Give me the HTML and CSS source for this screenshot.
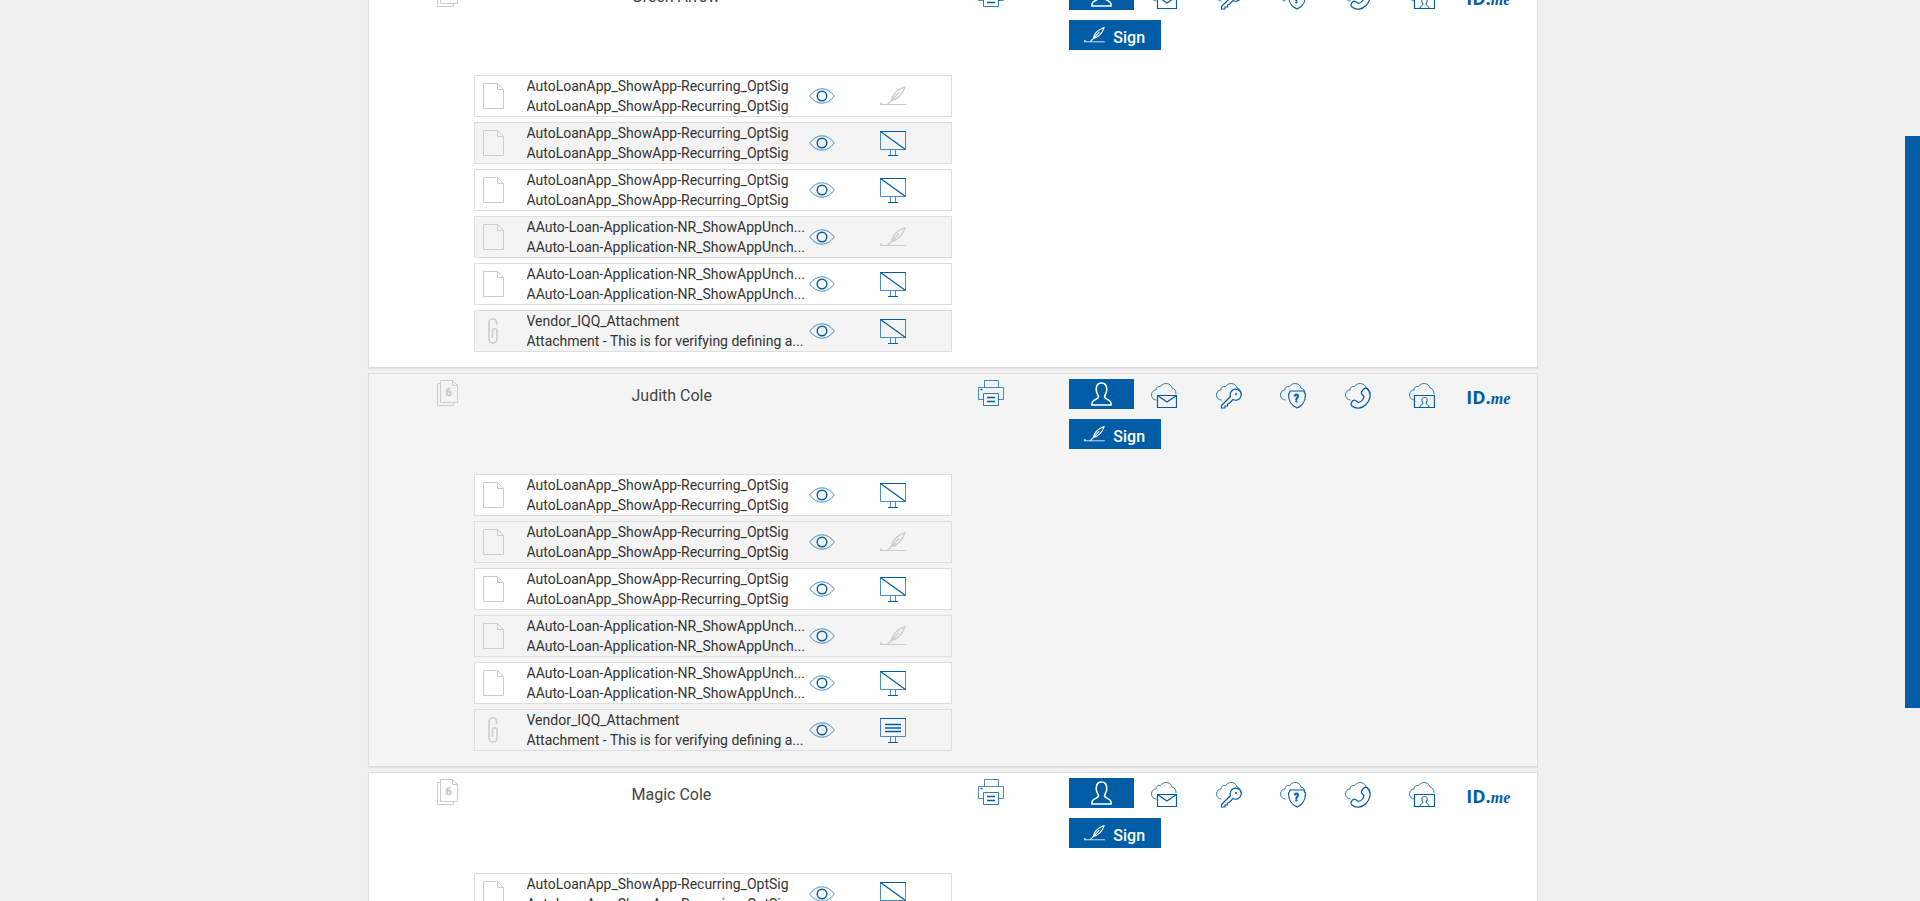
FILE: index.html
```html
<!DOCTYPE html>
<html lang="en">
<head>
    <meta charset="UTF-8">
    <meta name="viewport" content="width=device-width, initial-scale=1.0">
    <title>Sign Documents</title>
    <link rel="stylesheet" href="styles.css">
</head>
<body>
    <!-- icon sprite -->
    <svg class="sprite" aria-hidden="true">
        <symbol id="i-file" viewBox="0 0 21 26">
            <path d="M.5.5h14l6 6v19H.5zM14.5.5v6h6"/>
        </symbol>
        <symbol id="i-clip" viewBox="0 0 10 26">
            <path d="M8.500 7V4.500a3.700 3.700 0 0 0-7.500 0V21a4 4 0 0 0 8 0V12.500a2.300 2.300 0 0 0-4.500 0V20" stroke-width="1.600"/>
        </symbol>
        <symbol id="i-files" viewBox="0 0 21 26">
            <path d="M3 3.500H.5v22h16V23"/>
            <path d="M3.500.5h12l5 5v17h-17zM15.500.5v5h5"/>
            <text x="8.500" y="16" font-size="11">6</text>
        </symbol>
        <symbol id="i-eye" viewBox="0 0 26 16">
            <path d="M.7 8Q6 .8 13 .8T25.300 8Q20 15.200 13 15.200T.7 8z" stroke-width=".7"/>
            <circle cx="13" cy="8" r="4.800" stroke-width="1.400"/>
        </symbol>
        <symbol id="i-quill" viewBox="0 0 26 20">
            <path d="M0 18.500h26"/>
            <path d="M0 16.500h2v2H0z" fill="currentColor" stroke="none"/>
            <path d="M25 .7c-6 2.300-12.500 7-13.500 13.800C17 13.500 23 8 25 .7zM19 6.500l-7.500 8-4 3.700" stroke-width="1.300"/>
        </symbol>
        <symbol id="i-board-off" viewBox="0 0 26 25">
            <path d="M.5.5h25v18H.5zM10.500 19v5M15.500 19v5" stroke-width=".7"/>
            <path d="M0 .5h26M.5.5l25 18M8 24.500h10" stroke-width="1.200"/>
        </symbol>
        <symbol id="i-board" viewBox="0 0 26 25">
            <path d="M.5.5h25v18H.5zM10.500 19v5M15.500 19v5" stroke-width=".7"/>
            <path d="M0 .5h26M8 24.500h10" stroke-width="1.200"/>
            <path d="M5 6.500h16M5 10h16M5 13.500h16" stroke-width="1.400"/>
        </symbol>
        <symbol id="i-print" viewBox="0 0 26 26">
            <path d="M6.500 7.500v-7h14v7M5.500 19.500h-5v-12h25v12h-5" stroke-width=".7"/>
            <path d="M5.500 13.500h15v12h-15z" stroke-width=".8"/>
            <path d="M2.500 9.500h2M9 17.500h8M9 21.500h8" stroke-width="1.300"/>
        </symbol>
        <symbol id="i-person" viewBox="0 0 21 24">
            <path d="M7.500 15c0-2-2.300-4-2.300-7.500C5.200 3 7 1 10.500 1s5.300 2 5.300 6.500c0 3.500-2.300 5.500-2.300 7.500 0 2 6.500 3 6.500 6v2H1v-2c0-3 6.500-4 6.500-6z" stroke-width="1.600"/>
        </symbol>
        <symbol id="i-cloud" viewBox="0 0 26 26">
            <path d="M5.500 17C2.500 17 .5 14.700.5 12c0-3 2-5 4.500-5C5 4.500 7 3 9.500 3.500 11 1.500 13 .5 15 .5c3.500 0 5.500 2 6 4.500 2.500.5 4 2.500 4 6" stroke-width=".8"/>
        </symbol>
        <symbol id="i-mail" viewBox="0 0 26 26">
            <use href="#i-cloud"/>
            <path d="M6.500 12.500h19v12h-19zl9.500 6.500 9.500-6.500" class="cover" stroke-width="1.200"/>
        </symbol>
        <symbol id="i-key" viewBox="0 0 26 26">
            <use href="#i-cloud"/>
            <path d="M14.500 13.500l-9 9v2.500h3.500v-2h2.500V21l2-1 3.500-3.500a5.500 5.500 0 1 0-2.500-3z" class="cover" stroke-width="1.200"/>
            <circle cx="20" cy="11" r="1" fill="currentColor" stroke="none"/>
        </symbol>
        <symbol id="i-shield" viewBox="0 0 26 26">
            <use href="#i-cloud"/>
            <path d="M10 8h14c0 2 .5 2.500 1.500 3 0 7-2 11-8.500 14C10.500 22 8.500 18 8.500 11c1-.5 1.500-1 1.500-3z" class="cover" stroke-width="1.200"/>
            <text x="14" y="19" font-size="10">?</text>
        </symbol>
        <symbol id="i-phone" viewBox="0 0 26 26">
            <use href="#i-cloud"/>
            <path d="M17.500 7.500c1.500-2 3.500-3 5-1.500 4.500 5 2.500 11.500-1.500 15.500s-10 5-14 1.500c-2-1.500-.5-4 1-5.500 1.500-1 2.500-.5 4 1l1.500 1c3-1 5-3 5.500-6l-1.500-1.500c-1.500-1.500-1.500-3 0-4.500z" class="cover" stroke-width="1.200"/>
        </symbol>
        <symbol id="i-idcard" viewBox="0 0 26 26">
            <use href="#i-cloud"/>
            <path d="M5.500 12.500h20v12h-20z" class="cover" stroke-width="1.200"/>
            <path d="M11 24c0-2.500 3-2 3-4-2-3-1.500-5.500 1.500-5.500s3.500 2.500 1.500 5.500c0 2 3 1.500 3 4" stroke-width="1"/>
        </symbol>
    </svg>

    <div class="page">
        <main class="signers">
            <section class="card">
                <div class="signer">
                    <div class="signer-head">
                        <svg class="icon files"><use href="#i-files"/></svg>
                        <h2>Green Arrow</h2>
                    </div>
                    <ul class="docs">
                        <li class="doc">
                            <svg class="icon file"><use href="#i-file"/></svg>
                            <div class="doc-text"><p>AutoLoanApp_ShowApp-Recurring_OptSig</p><p>AutoLoanApp_ShowApp-Recurring_OptSig</p></div>
                            <button class="view" aria-label="View"><svg class="icon eye"><use href="#i-eye"/></svg></button>
                            <svg class="icon quill"><use href="#i-quill"/></svg>
                        </li>
                        <li class="doc">
                            <svg class="icon file"><use href="#i-file"/></svg>
                            <div class="doc-text"><p>AutoLoanApp_ShowApp-Recurring_OptSig</p><p>AutoLoanApp_ShowApp-Recurring_OptSig</p></div>
                            <button class="view" aria-label="View"><svg class="icon eye"><use href="#i-eye"/></svg></button>
                            <svg class="icon board"><use href="#i-board-off"/></svg>
                        </li>
                        <li class="doc">
                            <svg class="icon file"><use href="#i-file"/></svg>
                            <div class="doc-text"><p>AutoLoanApp_ShowApp-Recurring_OptSig</p><p>AutoLoanApp_ShowApp-Recurring_OptSig</p></div>
                            <button class="view" aria-label="View"><svg class="icon eye"><use href="#i-eye"/></svg></button>
                            <svg class="icon board"><use href="#i-board-off"/></svg>
                        </li>
                        <li class="doc">
                            <svg class="icon file"><use href="#i-file"/></svg>
                            <div class="doc-text"><p>AAuto-Loan-Application-NR_ShowAppUnch...</p><p>AAuto-Loan-Application-NR_ShowAppUnch...</p></div>
                            <button class="view" aria-label="View"><svg class="icon eye"><use href="#i-eye"/></svg></button>
                            <svg class="icon quill"><use href="#i-quill"/></svg>
                        </li>
                        <li class="doc">
                            <svg class="icon file"><use href="#i-file"/></svg>
                            <div class="doc-text"><p>AAuto-Loan-Application-NR_ShowAppUnch...</p><p>AAuto-Loan-Application-NR_ShowAppUnch...</p></div>
                            <button class="view" aria-label="View"><svg class="icon eye"><use href="#i-eye"/></svg></button>
                            <svg class="icon board"><use href="#i-board-off"/></svg>
                        </li>
                        <li class="doc">
                            <svg class="icon clip"><use href="#i-clip"/></svg>
                            <div class="doc-text"><p>Vendor_IQQ_Attachment</p><p>Attachment - This is for verifying defining a...</p></div>
                            <button class="view" aria-label="View"><svg class="icon eye"><use href="#i-eye"/></svg></button>
                            <svg class="icon board"><use href="#i-board-off"/></svg>
                        </li>
                    </ul>
                </div>
                <button class="print" aria-label="Print"><svg class="icon"><use href="#i-print"/></svg></button>
                <div class="actions">
                    <div class="methods">
                        <button class="method active" aria-label="In person"><svg class="icon person"><use href="#i-person"/></svg></button>
                        <button class="method" aria-label="Email"><svg class="icon"><use href="#i-mail"/></svg></button>
                        <button class="method" aria-label="Access key"><svg class="icon"><use href="#i-key"/></svg></button>
                        <button class="method" aria-label="Security question"><svg class="icon"><use href="#i-shield"/></svg></button>
                        <button class="method" aria-label="Phone"><svg class="icon"><use href="#i-phone"/></svg></button>
                        <button class="method" aria-label="ID check"><svg class="icon"><use href="#i-idcard"/></svg></button>
                        <button class="method idme">ID.<i>me</i></button>
                    </div>
                    <button class="sign"><svg class="icon"><use href="#i-quill"/></svg>Sign</button>
                </div>
            </section>

            <section class="card">
                <div class="signer">
                    <div class="signer-head">
                        <svg class="icon files"><use href="#i-files"/></svg>
                        <h2>Judith Cole</h2>
                    </div>
                    <ul class="docs">
                        <li class="doc">
                            <svg class="icon file"><use href="#i-file"/></svg>
                            <div class="doc-text"><p>AutoLoanApp_ShowApp-Recurring_OptSig</p><p>AutoLoanApp_ShowApp-Recurring_OptSig</p></div>
                            <button class="view" aria-label="View"><svg class="icon eye"><use href="#i-eye"/></svg></button>
                            <svg class="icon board"><use href="#i-board-off"/></svg>
                        </li>
                        <li class="doc">
                            <svg class="icon file"><use href="#i-file"/></svg>
                            <div class="doc-text"><p>AutoLoanApp_ShowApp-Recurring_OptSig</p><p>AutoLoanApp_ShowApp-Recurring_OptSig</p></div>
                            <button class="view" aria-label="View"><svg class="icon eye"><use href="#i-eye"/></svg></button>
                            <svg class="icon quill"><use href="#i-quill"/></svg>
                        </li>
                        <li class="doc">
                            <svg class="icon file"><use href="#i-file"/></svg>
                            <div class="doc-text"><p>AutoLoanApp_ShowApp-Recurring_OptSig</p><p>AutoLoanApp_ShowApp-Recurring_OptSig</p></div>
                            <button class="view" aria-label="View"><svg class="icon eye"><use href="#i-eye"/></svg></button>
                            <svg class="icon board"><use href="#i-board-off"/></svg>
                        </li>
                        <li class="doc">
                            <svg class="icon file"><use href="#i-file"/></svg>
                            <div class="doc-text"><p>AAuto-Loan-Application-NR_ShowAppUnch...</p><p>AAuto-Loan-Application-NR_ShowAppUnch...</p></div>
                            <button class="view" aria-label="View"><svg class="icon eye"><use href="#i-eye"/></svg></button>
                            <svg class="icon quill"><use href="#i-quill"/></svg>
                        </li>
                        <li class="doc">
                            <svg class="icon file"><use href="#i-file"/></svg>
                            <div class="doc-text"><p>AAuto-Loan-Application-NR_ShowAppUnch...</p><p>AAuto-Loan-Application-NR_ShowAppUnch...</p></div>
                            <button class="view" aria-label="View"><svg class="icon eye"><use href="#i-eye"/></svg></button>
                            <svg class="icon board"><use href="#i-board-off"/></svg>
                        </li>
                        <li class="doc">
                            <svg class="icon clip"><use href="#i-clip"/></svg>
                            <div class="doc-text"><p>Vendor_IQQ_Attachment</p><p>Attachment - This is for verifying defining a...</p></div>
                            <button class="view" aria-label="View"><svg class="icon eye"><use href="#i-eye"/></svg></button>
                            <svg class="icon board"><use href="#i-board"/></svg>
                        </li>
                    </ul>
                </div>
                <button class="print" aria-label="Print"><svg class="icon"><use href="#i-print"/></svg></button>
                <div class="actions">
                    <div class="methods">
                        <button class="method active" aria-label="In person"><svg class="icon person"><use href="#i-person"/></svg></button>
                        <button class="method" aria-label="Email"><svg class="icon"><use href="#i-mail"/></svg></button>
                        <button class="method" aria-label="Access key"><svg class="icon"><use href="#i-key"/></svg></button>
                        <button class="method" aria-label="Security question"><svg class="icon"><use href="#i-shield"/></svg></button>
                        <button class="method" aria-label="Phone"><svg class="icon"><use href="#i-phone"/></svg></button>
                        <button class="method" aria-label="ID check"><svg class="icon"><use href="#i-idcard"/></svg></button>
                        <button class="method idme">ID.<i>me</i></button>
                    </div>
                    <button class="sign"><svg class="icon"><use href="#i-quill"/></svg>Sign</button>
                </div>
            </section>

            <section class="card">
                <div class="signer">
                    <div class="signer-head">
                        <svg class="icon files"><use href="#i-files"/></svg>
                        <h2>Magic Cole</h2>
                    </div>
                    <ul class="docs">
                        <li class="doc">
                            <svg class="icon file"><use href="#i-file"/></svg>
                            <div class="doc-text"><p>AutoLoanApp_ShowApp-Recurring_OptSig</p><p>AutoLoanApp_ShowApp-Recurring_OptSig</p></div>
                            <button class="view" aria-label="View"><svg class="icon eye"><use href="#i-eye"/></svg></button>
                            <svg class="icon board"><use href="#i-board-off"/></svg>
                        </li>
                    </ul>
                </div>
                <button class="print" aria-label="Print"><svg class="icon"><use href="#i-print"/></svg></button>
                <div class="actions">
                    <div class="methods">
                        <button class="method active" aria-label="In person"><svg class="icon person"><use href="#i-person"/></svg></button>
                        <button class="method" aria-label="Email"><svg class="icon"><use href="#i-mail"/></svg></button>
                        <button class="method" aria-label="Access key"><svg class="icon"><use href="#i-key"/></svg></button>
                        <button class="method" aria-label="Security question"><svg class="icon"><use href="#i-shield"/></svg></button>
                        <button class="method" aria-label="Phone"><svg class="icon"><use href="#i-phone"/></svg></button>
                        <button class="method" aria-label="ID check"><svg class="icon"><use href="#i-idcard"/></svg></button>
                        <button class="method idme">ID.<i>me</i></button>
                    </div>
                    <button class="sign"><svg class="icon"><use href="#i-quill"/></svg>Sign</button>
                </div>
            </section>
        </main>
        <div class="scroll-track"><div class="scroll-thumb"></div></div>
    </div>
</body>
</html>
```
FILE: styles.css
```css
* {
    box-sizing: border-box;
}
body {
    margin: 0;
    background-color: #f0f0f0;
    color: #333;
    font-family: Roboto, sans-serif;
    font-size: 14px;
    line-height: 20px;
}
h2, p, ul {
    margin: 0;
    padding: 0;
}
button {
    background: none;
    border: none;
    padding: 0;
    color: #005da6;
    font-family: inherit;
    cursor: pointer;
}
.sprite {
    display: none;
}
.icon {
    display: block;
    width: 26px;
    height: 26px;
    fill: none;
    stroke: currentColor;
    color: #005da6;
}
.icon text {
    fill: currentColor;
    stroke: none;
    font-weight: bold;
}
.page {
    display: flex;
    height: 100vh;
    overflow: hidden;
}

/* signers */
.signers {
    flex: 1;
    max-width: 1170px;
    margin: -26px auto 0;
}
.card {
    --card-bg: #fff;
    display: grid;
    grid-template-columns: 50% 10% 1fr;
    margin-bottom: 5px;
    padding-bottom: 15px;
    background-color: var(--card-bg);
    border: 1px solid #dedede;
    box-shadow: 0 1px 1px rgba(0, 0, 0, 0.05);
}
.card:nth-child(even) {
    --card-bg: #f4f4f4;
}
.cover {
    fill: var(--card-bg);
}
.signer {
    padding-right: 1px;
}
.signer-head {
    display: flex;
    align-items: flex-start;
    height: 100px;
    padding-left: 68px;
}
.files {
    width: 21px;
    margin-top: 6px;
    color: #ccc;
}
h2 {
    margin: 12px 0 0 174px;
    color: #444;
    font-size: 16px;
    font-weight: normal;
}

/* documents */
.docs {
    display: grid;
    gap: 5px;
    margin-left: 105px;
    list-style: none;
}
.doc {
    display: grid;
    grid-template-columns: 52px 1fr 71px 71px;
    align-items: center;
    height: 42px;
    background-color: #fff;
    border: 1px solid #dedede;
}
.doc:nth-child(even) {
    background-color: #f4f4f4;
}
.doc-text {
    min-width: 0;
}
.doc-text p {
    overflow: hidden;
    text-overflow: ellipsis;
    white-space: nowrap;
}
.file, .clip, .doc .quill {
    color: #ccc;
}
.file {
    width: 21px;
    margin-left: 8px;
}
.clip {
    width: 10px;
    margin-left: 13px;
}
.eye {
    height: 16px;
}
.quill {
    height: 20px;
}
.board {
    height: 25px;
}

/* print and signing methods */
.print {
    justify-self: start;
    align-self: start;
    margin: 6px 0 0 25px;
}
.actions {
    padding: 5px 16px 0 0;
}
.methods {
    display: grid;
    grid-template-columns: repeat(7, 1fr);
    grid-template-rows: 30px;
    margin-bottom: 10px;
}
.method {
    display: flex;
    justify-content: center;
    align-items: flex-end;
    padding-right: 3px;
}
.active {
    align-items: center;
    padding: 0;
    background-color: #005da6;
}
.person {
    width: 21px;
    height: 24px;
    color: #fff;
}
.idme {
    align-items: baseline;
    padding: 7px 0 0;
    font-family: "Open Sans", sans-serif;
    font-size: 18px;
    font-weight: bold;
    line-height: 22px;
}
.idme i {
    font-family: "Liberation Serif", serif;
    font-size: 16px;
}
.sign {
    display: flex;
    align-items: center;
    gap: 8px;
    height: 30px;
    padding: 4px 16px 0 15px;
    background-color: #005da6;
    color: #fff;
    font-size: 16px;
    font-weight: 500;
}
.sign .icon {
    width: 21px;
    height: 16px;
    margin-bottom: 4px;
    color: #fff;
}

/* scrollbar */
.scroll-track {
    width: 15px;
    padding-top: 136px;
}
.scroll-thumb {
    height: 572px;
    background-color: #005da6;
}
```
